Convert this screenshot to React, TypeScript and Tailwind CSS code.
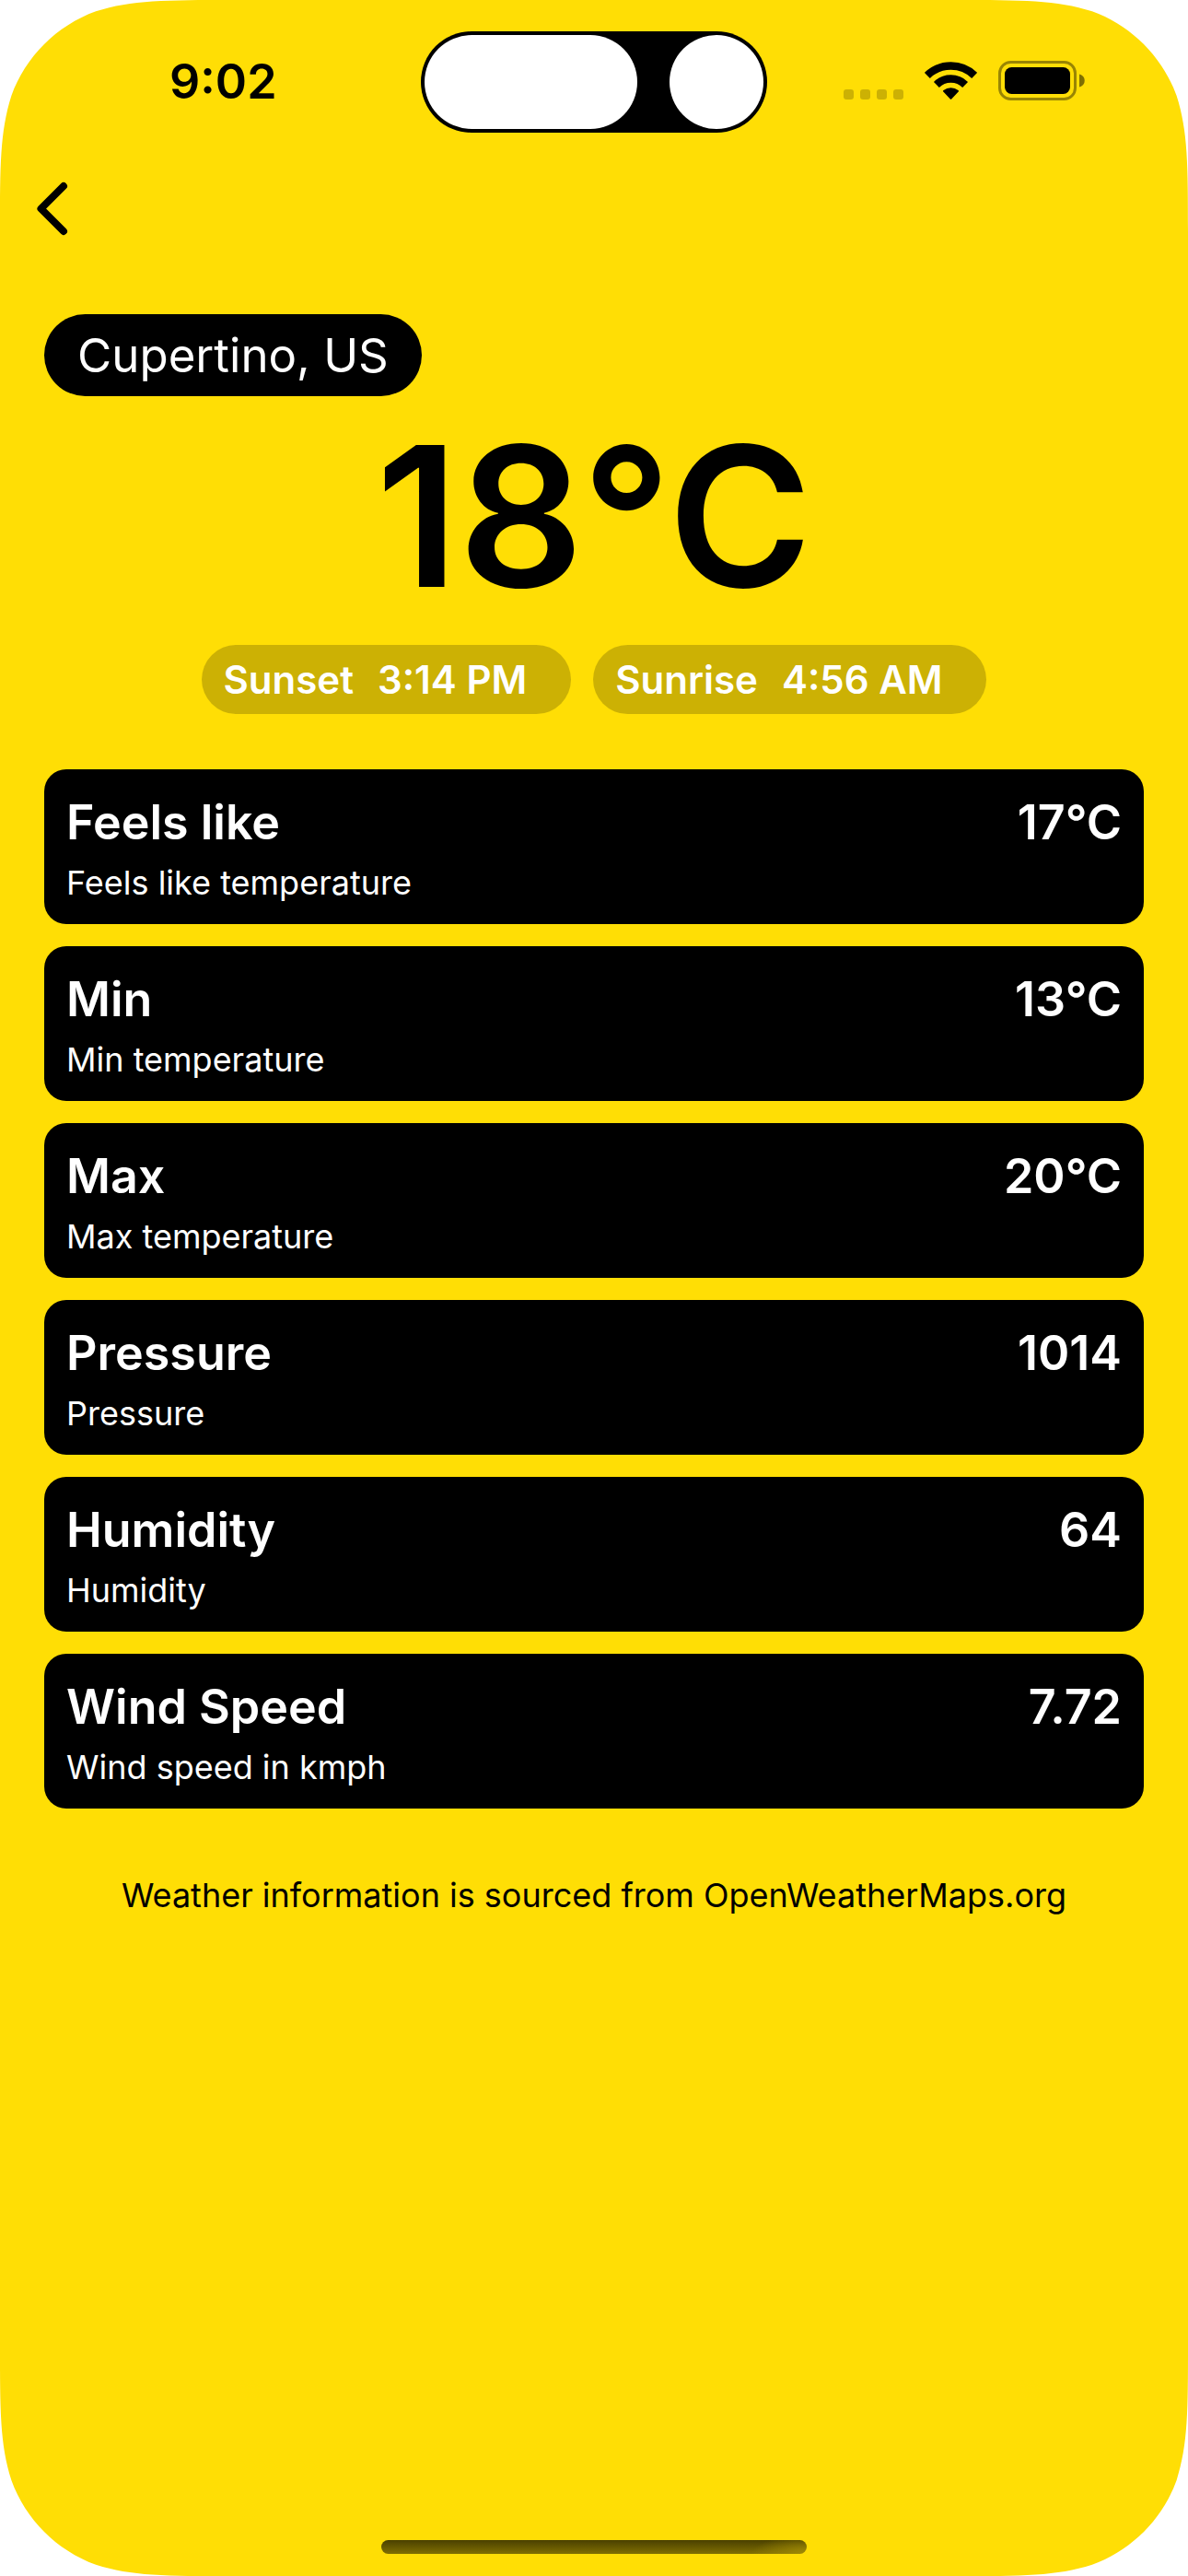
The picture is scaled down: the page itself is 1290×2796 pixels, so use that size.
type Reading = { title: string; detail: string; value: string };

const readings: Reading[] = [
  { title: "Feels like", detail: "Feels like temperature", value: "17°C" },
  { title: "Min", detail: "Min temperature", value: "13°C" },
  { title: "Max", detail: "Max temperature", value: "20°C" },
  { title: "Pressure", detail: "Pressure", value: "1014" },
  { title: "Humidity", detail: "Humidity", value: "64" },
  { title: "Wind Speed", detail: "Wind speed in kmph", value: "7.72" },
];

/* White wedge outside a continuous-curvature screen corner. */
function Corner({ className }: { className: string }) {
  return (
    <svg
      className={`pointer-events-none absolute size-[252px] ${className}`}
      viewBox="0 0 1.528665 1.528665"
      aria-hidden="true"
    >
      <path
        fill="#fff"
        d="M0 0H1.528665C1.088493 0 .868407 0 .631494 .074911C.372824 .169059 .169059 .372824 .074911 .631494C0 .868407 0 1.088493 0 1.528665Z"
      />
    </svg>
  );
}

function WifiIcon() {
  return (
    <svg className="h-[42px] w-[57px]" viewBox="0 0 57 42" aria-hidden="true">
      <g fill="none" stroke="#000" strokeWidth="8.4">
        <path d="M2.9 15.9A36.8 36.8 0 0 1 54.1 15.9" />
        <path d="M12.9 25.9A22.4 22.4 0 0 1 44.1 25.9" />
      </g>
      <path d="M20.3 33.6Q19.5 32.6 20.5 31.9A13 13 0 0 1 36.5 31.9Q37.5 32.6 36.7 33.6L29.2 41.4Q28.5 42.1 27.8 41.4Z" />
    </svg>
  );
}

function BatteryIcon() {
  return (
    <svg className="h-[43px] w-[94px]" viewBox="0 0 94 43" aria-hidden="true">
      <rect x="1.5" y="1.5" width="82" height="40" rx="12" fill="none" stroke="#000" strokeOpacity=".4" strokeWidth="3" />
      <rect x="7" y="7" width="71" height="29" rx="7.5" />
      <path d="M88 14.5C91.500 15.500 93.700 18 93.700 21.500S91.500 27.500 88 28.500Z" fillOpacity=".5" />
    </svg>
  );
}

function StatusBar() {
  return (
    <header className="grid grid-cols-[1fr_376px_1fr] items-center pt-[34px]">
      <div className="pl-[184px] text-[52px] leading-[64px] font-semibold">9:02</div>
      <div className="flex h-[110px] items-center justify-between rounded-full bg-black p-1">
        <div className="h-full w-[231px] rounded-full bg-white" />
        <div className="h-full w-[102px] rounded-full bg-white" />
      </div>
      <div className="flex items-end justify-end pr-28 pb-1">
        <div className="flex gap-[7px] pb-px">
          <span className="size-[11px] rounded-[3px] bg-black/20" />
          <span className="size-[11px] rounded-[3px] bg-black/20" />
          <span className="size-[11px] rounded-[3px] bg-black/20" />
          <span className="size-[11px] rounded-[3px] bg-black/20" />
        </div>
        <div className="ml-[23px] pb-px">
          <WifiIcon />
        </div>
        <div className="ml-[23px]">
          <BatteryIcon />
        </div>
      </div>
    </header>
  );
}

function SunPill({ label, time }: { label: string; time: string }) {
  return (
    <div className="flex gap-[26px] rounded-full bg-black/20 pr-12 pl-6 text-[42px] leading-[75px] font-semibold text-white">
      <span>{label}</span>
      <span>{time}</span>
    </div>
  );
}

function ReadingCard({ title, detail, value }: Reading) {
  return (
    <li className="rounded-3xl bg-black px-6 pt-6 pb-5 text-white">
      <div className="flex justify-between text-[52px] leading-[68px] font-semibold">
        <h2>{title}</h2>
        <span>{value}</span>
      </div>
      <p className="mt-1.5 text-[36px] leading-[50px]">{detail}</p>
    </li>
  );
}

export default function App() {
  return (
    <div className="relative flex min-h-screen flex-col bg-[#ffde05] font-['Inter',sans-serif] text-black">
      <Corner className="top-0 left-0" />
      <Corner className="top-0 right-0 rotate-90" />
      <Corner className="right-0 bottom-0 rotate-180" />
      <Corner className="bottom-0 left-0 -rotate-90" />

      <StatusBar />

      <nav className="px-9 pt-[50px]">
        <button type="button" aria-label="Back" className="block">
          <svg className="h-[65px] w-[41px]" viewBox="0 0 41 65" fill="none" aria-hidden="true">
            <path d="M33 8L8.500 32.500L33 57" stroke="#000" strokeWidth="8" strokeLinecap="round" strokeLinejoin="round" />
          </svg>
        </button>
      </nav>

      <main className="flex flex-1 flex-col px-12 pt-[82px]">
        <p className="self-start rounded-full bg-black px-9 text-[51px] leading-[89px] font-normal text-white">
          Cupertino, US
        </p>
        <h1 className="mt-2 text-center text-[212px] leading-[244px] font-semibold">18°C</h1>
        <div className="mt-[18px] flex justify-center gap-6">
          <SunPill label="Sunset" time="3:14 PM" />
          <SunPill label="Sunrise" time="4:56 AM" />
        </div>
        <ul className="mt-[60px] flex flex-col gap-6">
          {readings.map((r) => (
            <ReadingCard key={r.title} {...r} />
          ))}
        </ul>
        <p className="mt-[69px] text-center text-[36px] leading-[50px]">
          Weather information is sourced from OpenWeatherMaps.org
        </p>
      </main>

      <div className="mx-auto mb-6 h-[15px] w-[462px] rounded-full bg-[radial-gradient(60px_20px_at_100%_100%,#a08a05,transparent),linear-gradient(#4a4000,#806f02)]" />
    </div>
  );
}
